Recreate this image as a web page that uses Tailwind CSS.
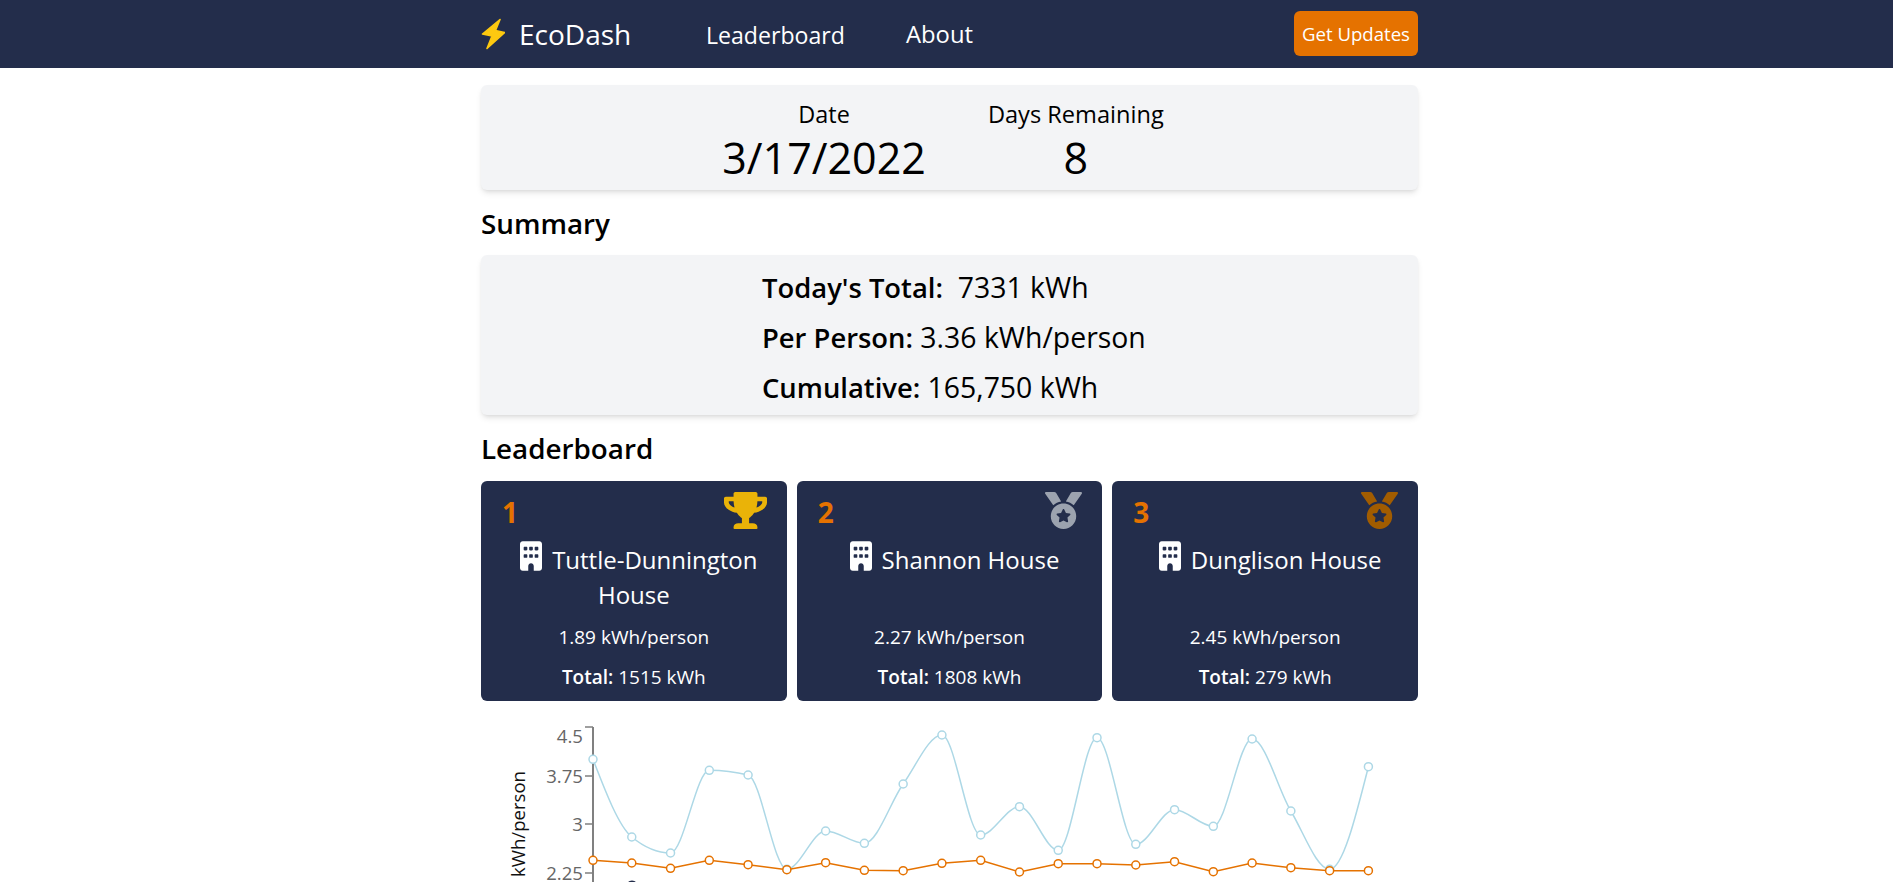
<!doctype html>
<html lang="en">
<head>
<meta charset="utf-8">
<title>EcoDash</title>
<script src="https://cdn.jsdelivr.net/npm/@tailwindcss/browser@4"></script>
</head>
<body class="bg-white text-black font-['Open_Sans',sans-serif]">
<div class="h-[882px] overflow-hidden">
  <nav class="h-[68px] bg-[#232d4b] text-white">
    <div class="ml-[481px] w-[937px] h-full flex items-center">
      <svg class="w-[24px] h-[32px] -mt-[1px]" viewBox="480 18 24 32" aria-hidden="true"><path d="M499 19.5 L481.5 34 L491 36 L486 48.5 L503.5 32.5 L494.5 30.5 Z" fill="#fdc910" stroke="#fdc910" stroke-width="1.6" stroke-linejoin="round"/></svg>
      <span class="ml-[14px] text-[28px] w-[187px]">EcoDash</span>
      <a class="mt-[2px] text-[23.1px] w-[200px]">Leaderboard</a>
      <a class="mt-[2px] text-[23.8px]">About</a>
      <button class="ml-auto -mt-[1px] h-[45px] w-[124px] rounded-md bg-[#e57200] text-[18.6px] text-white">Get Updates</button>
    </div>
  </nav>
  <main class="ml-[481px] w-[937px]">
    <section class="mt-[17px] h-[105px] rounded-md bg-gray-100 shadow-md flex justify-center gap-[62px] pr-[13px] pt-[13px]">
      <div class="flex flex-col items-center">
        <div class="text-[23.4px] leading-[32px]">Date</div>
        <div class="mt-[2px] text-[43px] leading-[52px]">3/17/2022</div>
      </div>
      <div class="flex flex-col items-center">
        <div class="text-[23.6px] leading-[32px]">Days Remaining</div>
        <div class="mt-[2px] text-[43px] leading-[52px]">8</div>
      </div>
    </section>
    <h2 class="mt-[15px] text-[27.8px] leading-[36px] font-semibold">Summary</h2>
    <section class="mt-[14px] h-[160px] rounded-md bg-gray-100 shadow-md pl-[281px] pt-[7px] text-[28.4px] leading-[50px]">
      <div><b class="font-semibold text-[27.4px] leading-none">Today's Total:</b>&nbsp; 7331 kWh</div>
      <div><b class="font-semibold text-[27.4px] leading-none">Per Person:</b> 3.36 kWh/person</div>
      <div><b class="font-semibold text-[27.4px] leading-none">Cumulative:</b> 165,750 kWh</div>
    </section>
    <h2 class="mt-[15px] text-[27.8px] leading-[36px] font-semibold">Leaderboard</h2>
    <section class="mt-[15px] grid grid-cols-3 gap-[10px] text-white">
      <article class="relative h-[220px] rounded-md bg-[#232d4b] pt-[60px] px-[16px] text-center">
        <span class="absolute left-[21px] top-[12px] text-[28px] leading-[38px] font-bold text-[#e57200]">1</span>
        <svg class="absolute right-[20px] top-[11px] w-[43px] h-[37px]" viewBox="0 0 576 512" fill="#eab308" preserveAspectRatio="none" aria-hidden="true"><path d="M552 64H448V24c0-13.3-10.7-24-24-24H152c-13.3 0-24 10.7-24 24v40H24C10.7 64 0 74.7 0 88v56c0 35.7 22.5 72.4 61.9 100.7 31.5 22.7 69.8 37.1 110 41.7C203.3 338.5 240 360 240 360v72h-48c-35.3 0-64 20.7-64 56v12c0 6.6 5.4 12 12 12h296c6.6 0 12-5.4 12-12v-12c0-35.3-28.7-56-64-56h-48v-72s36.7-21.5 68.1-73.6c40.3-4.6 78.6-19 110-41.7 39.3-28.3 61.9-65 61.9-100.7V88c0-13.3-10.7-24-24-24zM99.3 192.8C74.9 175.2 64 155.6 64 144v-16h64.2c1 32.6 5.8 61.2 12.8 86.2-15.1-5.2-29.2-12.4-41.7-21.4zM512 144c0 16.1-17.7 36.1-35.3 48.8-12.5 9-26.7 16.2-41.8 21.4 7-25 11.8-53.6 12.8-86.2H512v16z"/></svg>
        <div class="h-[70px] text-[24px] leading-[35px]"><svg class="inline-block align-[-2px] w-[22px] h-[30px] mx-[10px]" viewBox="0 0 384 512" fill="#fff" aria-hidden="true"><path d="M48 0C21.5 0 0 21.5 0 48V464c0 26.5 21.5 48 48 48h96V432c0-26.5 21.5-48 48-48s48 21.5 48 48v80h96c26.5 0 48-21.5 48-48V48c0-26.5-21.5-48-48-48H48zM64 240c0-8.8 7.2-16 16-16h32c8.8 0 16 7.2 16 16v32c0 8.8-7.2 16-16 16H80c-8.8 0-16-7.2-16-16V240zm112-16h32c8.8 0 16 7.2 16 16v32c0 8.8-7.2 16-16 16H176c-8.8 0-16-7.2-16-16V240c0-8.8 7.2-16 16-16zm80 16c0-8.8 7.2-16 16-16h32c8.8 0 16 7.2 16 16v32c0 8.8-7.2 16-16 16H272c-8.8 0-16-7.2-16-16V240zM80 96h32c8.8 0 16 7.2 16 16v32c0 8.8-7.2 16-16 16H80c-8.8 0-16-7.2-16-16V112c0-8.8 7.2-16 16-16zm80 16c0-8.8 7.2-16 16-16h32c8.8 0 16 7.2 16 16v32c0 8.8-7.2 16-16 16H176c-8.8 0-16-7.2-16-16V112zM272 96h32c8.8 0 16 7.2 16 16v32c0 8.8-7.2 16-16 16H272c-8.8 0-16-7.2-16-16V112c0-8.8 7.2-16 16-16z"/></svg>Tuttle-Dunnington House</div>
        <div class="mt-[6px] text-[19px] leading-[40px]">1.89 kWh/person</div>
        <div class="text-[19px] leading-[40px]"><b class="font-semibold">Total:</b> 1515 kWh</div>
      </article>
      <article class="relative h-[220px] rounded-md bg-[#232d4b] pt-[60px] px-[16px] text-center">
        <span class="absolute left-[21px] top-[12px] text-[28px] leading-[38px] font-bold text-[#e57200]">2</span>
        <svg class="absolute right-[20px] top-[11px] w-[37px] h-[37px]" viewBox="0 0 512 512" fill="#9ca3af" aria-hidden="true"><path d="M223.75 130.75L154.62 15.54A31.997 31.997 0 0 0 127.18 0H16.03C3.08 0-4.5 14.57 2.92 25.18l111.27 158.96c29.72-27.77 67.52-46.83 109.56-53.39zM495.97 0H384.82c-11.24 0-21.66 5.9-27.44 15.54l-69.13 115.21c42.04 6.56 79.84 25.62 109.56 53.38L509.08 25.18C516.5 14.57 508.92 0 495.97 0zM256 160c-97.2 0-176 78.8-176 176s78.8 176 176 176 176-78.8 176-176-78.8-176-176-176zm92.52 157.26l-37.93 36.96 8.97 52.22c1.6 9.36-8.26 16.51-16.65 12.09L256 393.88l-46.9 24.65c-8.4 4.45-18.25-2.74-16.65-12.09l8.97-52.22-37.93-36.96c-6.82-6.64-3.05-18.23 6.35-19.59l52.43-7.64 23.43-47.52c2.11-4.28 6.19-6.44 10.28-6.48 4.11-.04 8.22 2.14 10.39 6.48l23.43 47.52 52.43 7.64c9.4 1.36 13.17 12.95 6.35 19.59z"/></svg>
        <div class="h-[70px] text-[24px] leading-[35px]"><svg class="inline-block align-[-2px] w-[22px] h-[30px] mx-[10px]" viewBox="0 0 384 512" fill="#fff" aria-hidden="true"><path d="M48 0C21.5 0 0 21.5 0 48V464c0 26.5 21.5 48 48 48h96V432c0-26.5 21.5-48 48-48s48 21.5 48 48v80h96c26.5 0 48-21.5 48-48V48c0-26.5-21.5-48-48-48H48zM64 240c0-8.8 7.2-16 16-16h32c8.8 0 16 7.2 16 16v32c0 8.8-7.2 16-16 16H80c-8.8 0-16-7.2-16-16V240zm112-16h32c8.8 0 16 7.2 16 16v32c0 8.8-7.2 16-16 16H176c-8.8 0-16-7.2-16-16V240c0-8.8 7.2-16 16-16zm80 16c0-8.8 7.2-16 16-16h32c8.8 0 16 7.2 16 16v32c0 8.8-7.2 16-16 16H272c-8.8 0-16-7.2-16-16V240zM80 96h32c8.8 0 16 7.2 16 16v32c0 8.8-7.2 16-16 16H80c-8.8 0-16-7.2-16-16V112c0-8.8 7.2-16 16-16zm80 16c0-8.8 7.2-16 16-16h32c8.8 0 16 7.2 16 16v32c0 8.8-7.2 16-16 16H176c-8.8 0-16-7.2-16-16V112zM272 96h32c8.8 0 16 7.2 16 16v32c0 8.8-7.2 16-16 16H272c-8.8 0-16-7.2-16-16V112c0-8.8 7.2-16 16-16z"/></svg>Shannon House</div>
        <div class="mt-[6px] text-[19px] leading-[40px]">2.27 kWh/person</div>
        <div class="text-[19px] leading-[40px]"><b class="font-semibold">Total:</b> 1808 kWh</div>
      </article>
      <article class="relative h-[220px] rounded-md bg-[#232d4b] pt-[60px] px-[16px] text-center">
        <span class="absolute left-[21px] top-[12px] text-[28px] leading-[38px] font-bold text-[#e57200]">3</span>
        <svg class="absolute right-[20px] top-[11px] w-[37px] h-[37px]" viewBox="0 0 512 512" fill="#a15c00" aria-hidden="true"><path d="M223.75 130.75L154.62 15.54A31.997 31.997 0 0 0 127.18 0H16.03C3.08 0-4.5 14.57 2.92 25.18l111.27 158.96c29.72-27.77 67.52-46.83 109.56-53.39zM495.97 0H384.82c-11.24 0-21.66 5.9-27.44 15.54l-69.13 115.21c42.04 6.56 79.84 25.62 109.56 53.38L509.08 25.18C516.5 14.57 508.92 0 495.97 0zM256 160c-97.2 0-176 78.8-176 176s78.8 176 176 176 176-78.8 176-176-78.8-176-176-176zm92.52 157.26l-37.93 36.96 8.97 52.22c1.6 9.36-8.26 16.51-16.65 12.09L256 393.88l-46.9 24.65c-8.4 4.45-18.25-2.74-16.65-12.09l8.97-52.22-37.93-36.96c-6.82-6.64-3.05-18.23 6.35-19.59l52.43-7.64 23.43-47.52c2.11-4.28 6.19-6.44 10.28-6.48 4.11-.04 8.22 2.14 10.39 6.48l23.43 47.52 52.43 7.64c9.4 1.36 13.17 12.95 6.35 19.59z"/></svg>
        <div class="h-[70px] text-[24px] leading-[35px]"><svg class="inline-block align-[-2px] w-[22px] h-[30px] mx-[10px]" viewBox="0 0 384 512" fill="#fff" aria-hidden="true"><path d="M48 0C21.5 0 0 21.5 0 48V464c0 26.5 21.5 48 48 48h96V432c0-26.5 21.5-48 48-48s48 21.5 48 48v80h96c26.5 0 48-21.5 48-48V48c0-26.5-21.5-48-48-48H48zM64 240c0-8.8 7.2-16 16-16h32c8.8 0 16 7.2 16 16v32c0 8.8-7.2 16-16 16H80c-8.8 0-16-7.2-16-16V240zm112-16h32c8.8 0 16 7.2 16 16v32c0 8.8-7.2 16-16 16H176c-8.8 0-16-7.2-16-16V240c0-8.8 7.2-16 16-16zm80 16c0-8.8 7.2-16 16-16h32c8.8 0 16 7.2 16 16v32c0 8.8-7.2 16-16 16H272c-8.8 0-16-7.2-16-16V240zM80 96h32c8.8 0 16 7.2 16 16v32c0 8.8-7.2 16-16 16H80c-8.8 0-16-7.2-16-16V112c0-8.8 7.2-16 16-16zm80 16c0-8.8 7.2-16 16-16h32c8.8 0 16 7.2 16 16v32c0 8.8-7.2 16-16 16H176c-8.8 0-16-7.2-16-16V112zM272 96h32c8.8 0 16 7.2 16 16v32c0 8.8-7.2 16-16 16H272c-8.8 0-16-7.2-16-16V112c0-8.8 7.2-16 16-16z"/></svg>Dunglison House</div>
        <div class="mt-[6px] text-[19px] leading-[40px]">2.45 kWh/person</div>
        <div class="text-[19px] leading-[40px]"><b class="font-semibold">Total:</b> 279 kWh</div>
      </article>
    </section>
    <svg class="mt-[15px] block w-[937px] h-[167px]" viewBox="481 715 937 167" aria-label="kWh per person chart">
      <text transform="translate(525 823) rotate(-90)" text-anchor="middle" font-size="18.6" fill="#111">kWh/person</text>
      <g stroke="#808080" fill="none">
        <path d="M593 726V882" stroke-width="2"/>
        <path d="M585 726H593M585 775H593M585 823H593M585 872H593" stroke-width="1.5"/>
      </g>
      <g fill="#666" font-size="18.6" text-anchor="end">
        <text x="583" y="742">4.5</text>
        <text x="583" y="782">3.75</text>
        <text x="583" y="830">3</text>
        <text x="583" y="879">2.25</text>
      </g>
      <path fill="none" stroke="#add8e6" stroke-width="1.5" d="M593 758.3C605.92 791.8 618.85 825.3 631.77 836C644.69 846.67 657.62 852 670.54 852C683.46 852 696.39 769.3 709.31 769.3C722.23 769.3 735.16 770.87 748.08 774C761 777.13 773.93 868.3 786.85 868.3C799.77 868.3 812.7 830 825.62 830C838.54 830 851.47 842.3 864.39 842.3C877.31 842.3 890.24 801.05 903.16 783C916.08 764.95 929.01 734 941.93 734C954.85 734 967.78 834 980.7 834C993.62 834 1006.55 805.7 1019.47 805.7C1032.39 805.7 1045.32 849.3 1058.24 849.3C1071.16 849.3 1084.09 736.7 1097.01 736.7C1109.93 736.7 1122.86 843.3 1135.78 843.3C1148.7 843.3 1161.63 808.7 1174.55 808.7C1187.47 808.7 1200.4 825.3 1213.32 825.3C1226.24 825.3 1239.17 738 1252.09 738C1265.01 738 1277.94 788.28 1290.86 810C1303.78 831.72 1316.71 868.3 1329.63 868.3C1342.55 868.3 1355.48 817 1368.4 765.7"/>
      <g fill="#fff" stroke="#add8e6" stroke-width="1.5">
        <circle cx="593" cy="758.3" r="4"/><circle cx="631.77" cy="836" r="4"/><circle cx="670.54" cy="852" r="4"/><circle cx="709.31" cy="769.3" r="4"/><circle cx="748.08" cy="774" r="4"/><circle cx="786.85" cy="868.3" r="4"/><circle cx="825.62" cy="830" r="4"/><circle cx="864.39" cy="842.3" r="4"/><circle cx="903.16" cy="783" r="4"/><circle cx="941.93" cy="734" r="4"/><circle cx="980.7" cy="834" r="4"/><circle cx="1019.47" cy="805.7" r="4"/><circle cx="1058.24" cy="849.3" r="4"/><circle cx="1097.01" cy="736.7" r="4"/><circle cx="1135.78" cy="843.3" r="4"/><circle cx="1174.55" cy="808.7" r="4"/><circle cx="1213.32" cy="825.3" r="4"/><circle cx="1252.09" cy="738" r="4"/><circle cx="1290.86" cy="810" r="4"/><circle cx="1329.63" cy="868.3" r="4"/><circle cx="1368.4" cy="765.7" r="4"/>
      </g>
      <polyline fill="none" stroke="#e57200" stroke-width="1.5" points="593,859.3 631.77,862 670.54,867.3 709.31,859.3 748.08,863.7 786.85,868.7 825.62,861.7 864.39,869.3 903.16,869.7 941.93,862.3 980.7,859.3 1019.47,871 1058.24,862.7 1097.01,862.7 1135.78,864 1174.55,860.7 1213.32,870.7 1252.09,862 1290.86,866.7 1329.63,869.7 1368.4,869.7"/>
      <g fill="#fff" stroke="#e57200" stroke-width="1.5">
        <circle cx="593" cy="859.3" r="4"/><circle cx="631.77" cy="862" r="4"/><circle cx="670.54" cy="867.3" r="4"/><circle cx="709.31" cy="859.3" r="4"/><circle cx="748.08" cy="863.7" r="4"/><circle cx="786.85" cy="868.7" r="4"/><circle cx="825.62" cy="861.7" r="4"/><circle cx="864.39" cy="869.3" r="4"/><circle cx="903.16" cy="869.7" r="4"/><circle cx="941.93" cy="862.3" r="4"/><circle cx="980.7" cy="859.3" r="4"/><circle cx="1019.47" cy="871" r="4"/><circle cx="1058.24" cy="862.7" r="4"/><circle cx="1097.01" cy="862.7" r="4"/><circle cx="1135.78" cy="864" r="4"/><circle cx="1174.55" cy="860.7" r="4"/><circle cx="1213.32" cy="870.7" r="4"/><circle cx="1252.09" cy="862" r="4"/><circle cx="1290.86" cy="866.7" r="4"/><circle cx="1329.63" cy="869.7" r="4"/><circle cx="1368.4" cy="869.7" r="4"/>
      </g>
      <path d="M628 884C628 879 636 879 636 884" fill="none" stroke="#232d4b" stroke-width="1.5"/>
    </svg>
  </main>
</div>
</body>
</html>
